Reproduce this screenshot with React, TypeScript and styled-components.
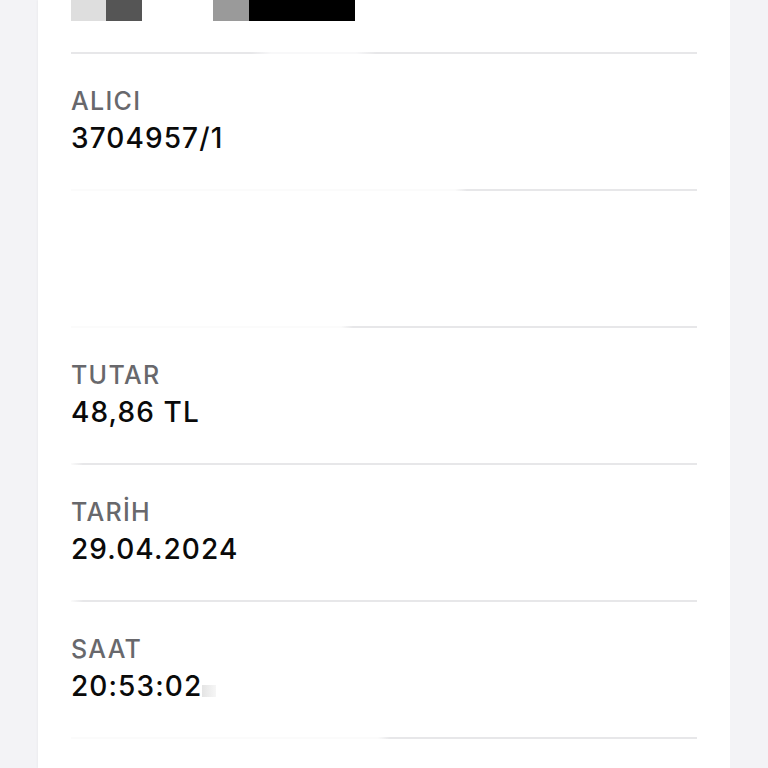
import React from "react";
import styled, { createGlobalStyle } from "styled-components";

const GlobalStyle = createGlobalStyle`
  html, body {
    margin: 0;
    padding: 0;
    background: #f3f3f6;
    font-family: Inter, "Noto Sans", "Liberation Sans", sans-serif;
  }
`;

const Page = styled.div`
  display: flex;
  min-height: 768px;
  background: #f3f3f6;
  overflow: hidden;
`;

const Panel = styled.main`
  margin-left: 38px;
  width: 692px;
  min-height: 768px;
  background: #ffffff;
  padding: 0 33px;
  box-sizing: border-box;
  box-shadow: -1px 0 2px rgba(0, 0, 0, 0.03);
`;

const CensorRow = styled.div`
  display: flex;
  height: 21px;
  margin-bottom: 31px;
`;

const Block = styled.div<{ $w: number; $color: string; $gap?: number }>`
  width: ${(p) => p.$w}px;
  height: 100%;
  background: ${(p) => p.$color};
  margin-left: ${(p) => p.$gap ?? 0}px;
`;

const Divider = styled.div<{ $from?: number; $gapFrom?: number; $gapTo?: number }>`
  height: 2px;
  background: ${(p) =>
    p.$gapFrom !== undefined
      ? `linear-gradient(to right, #e7e7e9 0, #e7e7e9 ${p.$gapFrom}px, #f8f8f9 ${p.$gapFrom + 20}px, #f8f8f9 ${p.$gapTo! - 20}px, #e7e7e9 ${p.$gapTo}px)`
      : `linear-gradient(to right, #fbfbfb 0, #fbfbfb ${p.$from ?? 0}px, #e7e7e9 ${(p.$from ?? 0) + 12}px)`};
`;

const Row = styled.section`
  height: 135px;
  padding-top: 32px;
  box-sizing: border-box;
  display: flex;
  flex-direction: column;
  gap: 5px;
`;

const Label = styled.div`
  font-size: 25px;
  line-height: 30px;
  font-weight: 500;
  color: #68686c;
  letter-spacing: 1.3px;
`;

const Value = styled.div`
  font-size: 28px;
  line-height: 34px;
  font-weight: 500;
  color: #0a0a0a;
  letter-spacing: 1.1px;
  display: flex;
  align-items: center;
`;

const Smudge = styled.span`
  display: inline-block;
  width: 14px;
  height: 12px;
  margin-top: 10px;
  background: linear-gradient(to right, #e4e4e4, #f6f6f6);
`;

const rows = [
  { label: "TUTAR", value: "48,86 TL" },
  { label: "TARİH", value: "29.04.2024" },
];

const App: React.FC = () => {
  return (
    <Page>
      <GlobalStyle />
      <Panel>
        <CensorRow>
          <Block $w={35} $color="#dedede" />
          <Block $w={36} $color="#555555" />
          <Block $w={36} $color="#9a9a9a" $gap={71} />
          <Block $w={106} $color="#000000" />
        </CensorRow>
        <Divider $gapFrom={180} $gapTo={305} />
        <Row>
          <Label>ALICI</Label>
          <Value>3704957/1</Value>
        </Row>
        <Divider $from={384} />
        <Row />
        <Divider $from={270} />
        {rows.map((r) => (
          <React.Fragment key={r.label}>
            <Row>
              <Label>{r.label}</Label>
              <Value>{r.value}</Value>
            </Row>
            <Divider />
          </React.Fragment>
        ))}
        <Row>
          <Label>SAAT</Label>
          <Value>
            20:53:02
            <Smudge />
          </Value>
        </Row>
        <Divider $from={307} />
      </Panel>
    </Page>
  );
};

export default App;
